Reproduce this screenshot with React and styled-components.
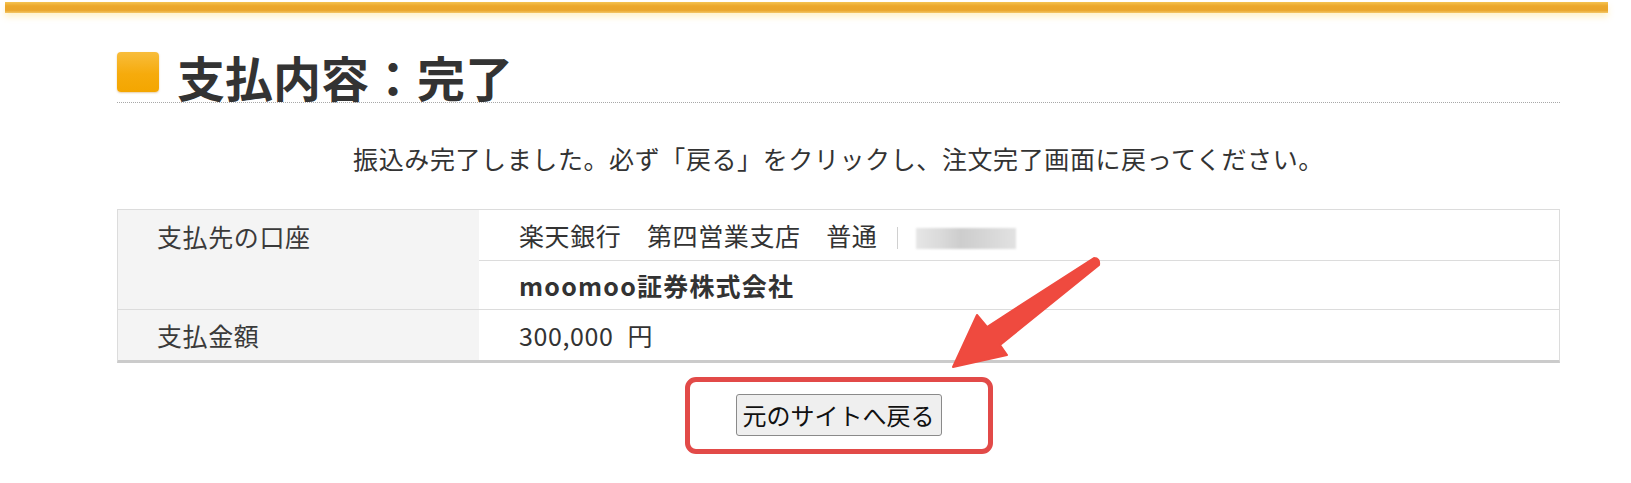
import React from "react";
import styled, { createGlobalStyle } from "styled-components";

const GlobalStyle = createGlobalStyle`
  html, body {
    margin: 0;
    padding: 0;
    background: #fff;
  }
  body {
    font-family: "Noto Sans CJK JP", "Noto Sans", sans-serif;
    color: #333;
  }
`;

const Page = styled.div`
  position: relative;
  width: 1631px;
  height: 483px;
  overflow: hidden;
`;

const TopBar = styled.div`
  margin: 2px 0 0 5px;
  width: 1603px;
  height: 11px;
  background: linear-gradient(#f5c451, #eca82a 35%, #eaa52a 75%, #f3c767);
  box-shadow: 0 4px 6px rgba(255, 226, 140, 0.45);
`;

const Content = styled.div`
  width: 1443px;
  margin: 37px 0 0 117px;
`;

const Heading = styled.h1`
  display: flex;
  align-items: center;
  margin: 0;
  height: 52px;
  border-bottom: 1px dotted #a8a8a8;
  font-size: 48px;
  font-weight: 700;
  color: #333;
  line-height: 52px;
`;

const Square = styled.span`
  width: 42px;
  height: 40px;
  margin: 0 18px 8px 0;
  border-radius: 4px;
  background: linear-gradient(#f8bd3c, #f6ab0c 55%, #f4a600);
  box-shadow: 0 1px 2px rgba(180, 110, 0, 0.35);
`;

const Message = styled.p`
  margin: 37px 0 0;
  text-align: center;
  font-size: 25px;
  letter-spacing: 0.6px;
  line-height: 36px;
  color: #333;
`;

const Table = styled.div`
  display: grid;
  grid-template-columns: 361px 1fr;
  grid-template-rows: 50px 49px 51px;
  margin-top: 33px;
  border: 1px solid #dcdcdc;
  border-bottom: 3px solid #cbcbcb;
`;

const Label = styled.div`
  grid-row: ${(p) => p.$rows || "auto"};
  padding-left: 39px;
  background: #f4f4f4;
  font-size: 25px;
  letter-spacing: 0.6px;
  line-height: ${(p) => p.$lh || "50px"};
  color: #3a3a3a;
  border-top: ${(p) => (p.$top ? "1px solid #dcdcdc" : "none")};
`;

const Value = styled.div`
  display: flex;
  align-items: center;
  padding-left: 40px;
  font-size: 25px;
  letter-spacing: ${(p) => (p.$bold ? "1.2px" : "0.6px")};
  font-weight: ${(p) => (p.$bold ? 700 : 400)};
  color: #333;
  border-top: ${(p) => (p.$top ? "1px solid #dcdcdc" : "none")};
`;

const Divider = styled.span`
  width: 1px;
  height: 22px;
  margin: 6px 18px 0 20px;
  background: #d0d0d0;
`;

const Masked = styled.span`
  width: 100px;
  height: 21px;
  margin-top: 6px;
  background: linear-gradient(
    to right,
    #e6e6e6,
    #dadada 25%,
    #cdcdcd 45%,
    #d6d6d6 70%,
    #e2e2e2
  );
  filter: blur(0.8px);
`;

const Yen = styled.span`
  margin-left: 14px;
`;

const ButtonRow = styled.div`
  display: flex;
  justify-content: center;
  margin-top: 14px;
`;

const Highlight = styled.div`
  padding: 12px 46px 13px;
  border: 5px solid #e24a48;
  border-radius: 11px;
`;

const BackButton = styled.button`
  display: block;
  height: 42px;
  padding: 0 6px;
  border: 1px solid #8a8a8a;
  border-radius: 3px;
  background: #efefef;
  font-family: "Noto Sans CJK JP", sans-serif;
  font-size: 24px;
  color: #111;
  line-height: 40px;
`;

const Arrow = styled.svg`
  position: absolute;
  left: 0;
  top: 0;
  pointer-events: none;
`;

const App = () => {
  return (
    <Page>
      <GlobalStyle />
      <TopBar />
      <Content>
        <Heading>
          <Square />
          支払内容：完了
        </Heading>
        <Message>
          振込み完了しました。必ず「戻る」をクリックし、注文完了画面に戻ってください。
        </Message>
        <Table>
          <Label $rows="1 / 3" $lh="52px">
            支払先の口座
          </Label>
          <Value>
            楽天銀行　第四営業支店　普通
            <Divider />
            <Masked />
          </Value>
          <Value $top $bold>
            moomoo証券株式会社
          </Value>
          <Label $top $lh="50px">
            支払金額
          </Label>
          <Value $top>
            300,000<Yen>円</Yen>
          </Value>
        </Table>
        <ButtonRow>
          <Highlight>
            <BackButton type="button">元のサイトへ戻る</BackButton>
          </Highlight>
        </ButtonRow>
      </Content>
      <Arrow width="1631" height="483" viewBox="0 0 1631 483">
        <path
          d="M953 367 L977 315 L987 327 L1094 258 Q1100 258 1099 265 L1000 345 L1007 355 Z"
          fill="#ef4a3f"
          stroke="#ef4a3f"
          strokeWidth="2"
          strokeLinejoin="round"
        />
      </Arrow>
    </Page>
  );
};

export default App;
